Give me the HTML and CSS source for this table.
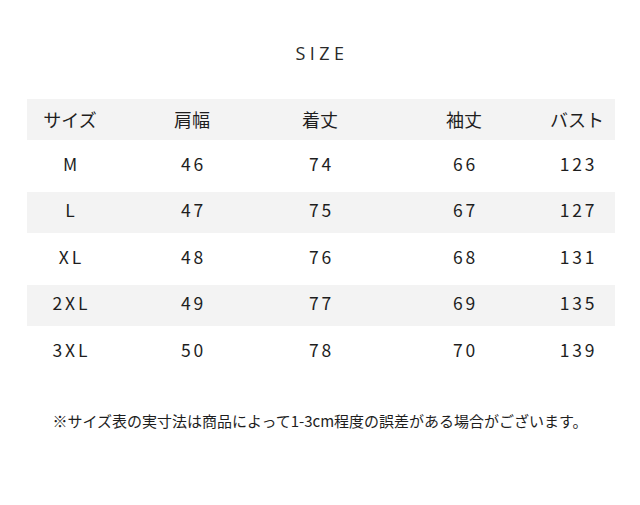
FILE: index.html
```html
<!DOCTYPE html>
<html lang="ja">
<head>
<meta charset="utf-8">
<link rel="stylesheet" href="styles.css">
</head>
<body>
<div class="page">
  <h1 class="title">SIZE</h1>
  <div class="table">
    <div class="row head">
      <div class="cell"><span>サイズ</span></div>
      <div class="cell"><span>肩幅</span></div>
      <div class="cell"><span>着丈</span></div>
      <div class="cell"><span>袖丈</span></div>
      <div class="cell"><span>バスト</span></div>
    </div>
    <div class="row tall">
      <div class="cell num"><span>M</span></div>
      <div class="cell num"><span>46</span></div>
      <div class="cell num"><span>74</span></div>
      <div class="cell num"><span>66</span></div>
      <div class="cell num"><span>123</span></div>
    </div>
    <div class="row shade">
      <div class="cell num"><span>L</span></div>
      <div class="cell num"><span>47</span></div>
      <div class="cell num"><span>75</span></div>
      <div class="cell num"><span>67</span></div>
      <div class="cell num"><span>127</span></div>
    </div>
    <div class="row tall">
      <div class="cell num"><span>XL</span></div>
      <div class="cell num"><span>48</span></div>
      <div class="cell num"><span>76</span></div>
      <div class="cell num"><span>68</span></div>
      <div class="cell num"><span>131</span></div>
    </div>
    <div class="row shade">
      <div class="cell num"><span>2XL</span></div>
      <div class="cell num"><span>49</span></div>
      <div class="cell num"><span>77</span></div>
      <div class="cell num"><span>69</span></div>
      <div class="cell num"><span>135</span></div>
    </div>
    <div class="row tall">
      <div class="cell num"><span>3XL</span></div>
      <div class="cell num"><span>50</span></div>
      <div class="cell num"><span>78</span></div>
      <div class="cell num"><span>70</span></div>
      <div class="cell num"><span>139</span></div>
    </div>
  </div>
  <p class="note">※サイズ表の実寸法は商品によって1-3cm程度の誤差がある場合がございます。</p>
</div>
</body>
</html>
```

FILE: styles.css
```css
html, body {
  margin: 0;
  padding: 0;
  background: #ffffff;
}
body {
  font-family: "Noto Sans CJK JP", "Noto Sans", sans-serif;
  color: #1e1e1e;
  width: 640px;
  height: 505px;
  overflow: hidden;
}
.page {
  padding-top: 41px;
}
.title {
  margin: 0;
  height: 58px;
  font-family: "Open Sans", "Noto Sans", sans-serif;
  font-weight: 400;
  font-size: 18px;
  letter-spacing: 4.5px;
  line-height: 24px;
  text-align: center;
  padding-left: 4px;
  color: #2a2a2a;
}
.table {
  margin-left: 27px;
  width: 588px;
}
.row {
  display: grid;
  grid-template-columns: 86px 158px 98px 190px 36px 20px;
}
.row.head {
  height: 41px;
  background: #f3f3f3;
}
.row.tall {
  height: 52px;
}
.row.shade {
  height: 41px;
  background: #f3f3f3;
}
.cell {
  display: flex;
  justify-content: center;
  align-items: center;
  white-space: nowrap;
  min-width: 0;
}
.head .cell {
  font-size: 18px;
  padding-bottom: 2px;
}
.cell.num {
  font-size: 17.5px;
  font-weight: 400;
  letter-spacing: 2.8px;
  padding-bottom: 6px;
}
.cell.num span {
  margin-right: -2.8px;
}
.note {
  margin: 33px 0 0 0;
  font-size: 15px;
  line-height: 20px;
  text-align: center;
  color: #1e1e1e;
}
```
